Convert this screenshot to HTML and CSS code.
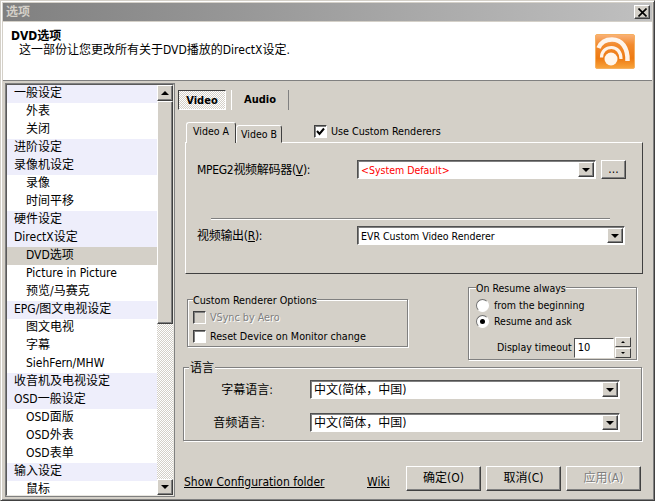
FILE: index.html
```html
<!DOCTYPE html>
<html lang="zh">
<head>
<meta charset="utf-8">
<title>选项</title>
<link rel="stylesheet" href="styles.css">
</head>
<body>
<div class="window">
  <div class="titlebar">
    <span class="title-text">选项</span>
    <button class="close-btn" aria-label="关闭">
      <svg width="9" height="9" viewBox="0 0 9 9"><path d="M0.5 0.5L8.5 8.5M8.5 0.5L0.5 8.5" stroke="#000" stroke-width="1.6" fill="none"/></svg>
    </button>
  </div>
  <header class="header">
    <div class="header-text">
      <div class="header-title">DVD选项</div>
      <div class="header-sub">这一部份让您更改所有关于DVD播放的DirectX设定.</div>
    </div>
    <svg class="logo" width="40" height="35" viewBox="0 0 40 35">
      <defs>
        <linearGradient id="logoFill" x1="0" y1="0" x2="0" y2="1">
          <stop offset="0" stop-color="#f9b27a"/>
          <stop offset="0.3" stop-color="#f28a2e"/>
          <stop offset="0.7" stop-color="#ee7a12"/>
          <stop offset="1" stop-color="#f8a43c"/>
        </linearGradient>
      </defs>
      <rect x="0.5" y="0.5" width="39" height="34" rx="1.5" fill="url(#logoFill)" stroke="#f6b060"/>
      <circle cx="16" cy="25" r="6.5" fill="#fff6ec"/>
      <path d="M6.5 23.5C6.5 17 11 13.500 16.500 13.500C22 13.500 26 18 26 25" stroke="#fff" stroke-width="3.2" fill="none" opacity="0.9"/>
      <path d="M3.500 14C6 8 11 5.500 17 5.500C27 5.500 33 14 32.500 27" stroke="#fff" stroke-width="4.500" fill="none" opacity="0.9"/>
    </svg>
  </header>
  <div class="main">
    <nav class="tree">
      <ul class="tree-list">
        <li class="group">一般设定</li>
        <li class="leaf">外表</li>
        <li class="leaf">关闭</li>
        <li class="group">进阶设定</li>
        <li class="group">录像机设定</li>
        <li class="leaf">录像</li>
        <li class="leaf">时间平移</li>
        <li class="group">硬件设定</li>
        <li class="group">DirectX设定</li>
        <li class="leaf selected">DVD选项</li>
        <li class="leaf">Picture in Picture</li>
        <li class="leaf">预览/马赛克</li>
        <li class="group">EPG/图文电视设定</li>
        <li class="leaf">图文电视</li>
        <li class="leaf">字幕</li>
        <li class="leaf">SiehFern/MHW</li>
        <li class="group">收音机及电视设定</li>
        <li class="group">OSD一般设定</li>
        <li class="leaf">OSD面版</li>
        <li class="leaf">OSD外表</li>
        <li class="leaf">OSD表单</li>
        <li class="group">输入设定</li>
        <li class="leaf">鼠标</li>
      </ul>
      <div class="scrollbar">
        <div class="sb-btn"><span class="arrow-up"></span></div>
        <div class="sb-thumb"></div>
        <div class="sb-track"></div>
        <div class="sb-btn"><span class="arrow-down"></span></div>
      </div>
    </nav>
    <section class="content">
      <div class="outer-tabs">
        <div class="outer-tab active"><span class="focus">Video</span></div>
        <div class="outer-tab">Audio</div>
      </div>
      <div class="inner-tabs">
        <div class="inner-tab active">Video A</div>
        <div class="inner-tab">Video B</div>
        <label class="check custom-renderers"><span class="box checked"><svg width="9" height="9" viewBox="0 0 9 9"><path d="M1 4L3.500 7L8 1.500" stroke="#000" stroke-width="2" fill="none"/></svg></span>Use Custom Renderers</label>
      </div>
      <div class="inner-panel">
        <div class="form-row decoder">
          <span class="field-label">MPEG2视频解码器(<u>V</u>):</span>
          <div class="combo combo-short"><span class="combo-value latin red">&lt;System Default&gt;</span><span class="combo-btn"><span class="arrow-down"></span></span></div>
          <button class="btn more-btn">...</button>
        </div>
        <div class="separator"></div>
        <div class="form-row output">
          <span class="field-label">视频输出(<u>R</u>):</span>
          <div class="combo combo-long"><span class="combo-value latin">EVR Custom Video Renderer</span><span class="combo-btn"><span class="arrow-down"></span></span></div>
        </div>
      </div>
      <div class="options-row">
        <fieldset class="group-box renderer-options">
          <legend>Custom Renderer Options</legend>
          <label class="check disabled"><span class="box"></span>VSync by Aero</label>
          <label class="check"><span class="box"></span>Reset Device on Monitor change</label>
        </fieldset>
        <fieldset class="group-box resume-options">
          <legend>On Resume always</legend>
          <label class="radio"><span class="dot"></span>from the beginning</label>
          <label class="radio"><span class="dot on"></span>Resume and ask</label>
          <div class="timeout">
            <span>Display timeout</span>
            <span class="spin-input">10</span>
            <span class="spin">
              <span class="spin-btn"><span class="arrow-up small"></span></span>
              <span class="spin-btn"><span class="arrow-down small"></span></span>
            </span>
          </div>
        </fieldset>
      </div>
      <fieldset class="group-box language">
        <legend>语言</legend>
        <div class="lang-row subtitle-row">
          <span class="lang-label">字幕语言:</span>
          <div class="combo combo-lang"><span class="combo-value">中文(简体，中国)</span><span class="combo-btn"><span class="arrow-down"></span></span></div>
        </div>
        <div class="lang-row audio-row">
          <span class="lang-label">音频语言:</span>
          <div class="combo combo-lang"><span class="combo-value">中文(简体，中国)</span><span class="combo-btn"><span class="arrow-down"></span></span></div>
        </div>
      </fieldset>
      <footer class="footer">
        <a class="link config-link">Show Configuration folder</a>
        <a class="link wiki-link">Wiki</a>
        <button class="btn action">确定(O)</button>
        <button class="btn action">取消(C)</button>
        <button class="btn action disabled">应用(A)</button>
      </footer>
    </section>
  </div>
</div>
</body>
</html>
```
FILE: styles.css
```css
* { box-sizing: border-box; }

html, body {
  margin: 0;
  padding: 0;
  width: 655px;
  height: 501px;
  overflow: hidden;
}

body {
  font: 12px/15px "DejaVu Sans Condensed", "DejaVu Sans", "Noto Sans CJK SC", sans-serif;
  font-stretch: condensed;
  color: #000;
  background: #d4d0c8;
}

.window {
  width: 655px;
  height: 501px;
  padding: 2px;
  border: 1px solid;
  border-color: #d4d0c8 #404040 #404040 #d4d0c8;
  box-shadow: inset 1px 1px 0 #fff, inset -1px -1px 0 #808080;
  background: #d4d0c8;
  display: flex;
  flex-direction: column;
}

/* Caption */
.titlebar {
  height: 18px;
  flex: none;
  display: flex;
  align-items: center;
  justify-content: space-between;
  padding: 0 2px 0 3px;
  background: linear-gradient(to right, #808080, #c0c0c0);
  color: #d4d0c8;
  font-weight: bold;
}

.close-btn {
  width: 16px;
  height: 14px;
  padding: 0;
  display: flex;
  align-items: center;
  justify-content: center;
  background: #d4d0c8;
  border: 1px solid;
  border-color: #fff #404040 #404040 #fff;
  box-shadow: inset -1px -1px 0 #808080;
}

/* White banner */
.header {
  height: 59px;
  margin-top: 1px;
  flex: none;
  display: flex;
  justify-content: space-between;
  background: #fff;
  border-bottom: 1px solid #808080;
  padding: 7px 17px 0 8px;
}

.header-title {
  font-weight: bold;
  line-height: 14px;
}

.header-sub {
  margin-left: 8px;
  line-height: 14px;
}

.logo {
  margin-top: 5px;
}

.main {
  flex: 1;
  display: flex;
  min-height: 0;
}

/* Settings tree */
.tree {
  width: 170px;
  height: 414px;
  margin: 2px 0 0 2px;
  flex: none;
  display: flex;
  background: #fff;
  border: 2px solid;
  border-color: #5a5a5a #e8e6e0 #e8e6e0 #5a5a5a;
  outline: 1px solid #808080;
  outline-offset: -1px;
  overflow: hidden;
}

.tree-list {
  flex: 1;
  margin: 0;
  padding: 0;
  list-style: none;
  overflow: hidden;
}

.tree-list li {
  height: 18px;
  line-height: 16px;
  white-space: nowrap;
}

.group {
  padding-left: 7px;
  background: #eeeefb;
}

.leaf {
  padding-left: 19px;
}

.selected {
  background: #d4d0c8;
}

.scrollbar {
  width: 16px;
  flex: none;
  display: flex;
  flex-direction: column;
  background: repeating-conic-gradient(#d4d0c8 0 25%, #fff 0 50%) 0 0 / 2px 2px;
}

.sb-btn {
  height: 16px;
  flex: none;
  display: flex;
  align-items: center;
  justify-content: center;
  background: #d4d0c8;
  border: 1px solid;
  border-color: #fff #404040 #404040 #fff;
  box-shadow: inset -1px -1px 0 #808080;
}

.sb-thumb {
  height: 223px;
  flex: none;
  background: #d4d0c8;
  border: 1px solid;
  border-color: #fff #404040 #404040 #fff;
  box-shadow: inset -1px -1px 0 #808080;
}

.sb-track {
  flex: 1;
}

.arrow-up,
.arrow-down {
  display: block;
  width: 0;
  height: 0;
  border-left: 4px solid transparent;
  border-right: 4px solid transparent;
}

.arrow-up { border-bottom: 4px solid #000; }
.arrow-down { border-top: 4px solid #000; }

.arrow-up.small,
.arrow-down.small {
  border-left-width: 2px;
  border-right-width: 2px;
}
.arrow-up.small { border-bottom-width: 2px; }
.arrow-down.small { border-top-width: 2px; }

/* Right-hand page */
.content {
  flex: 1;
  min-width: 0;
  padding: 9px 0 0 3px;
}

.outer-tabs {
  display: flex;
  height: 21px;
  font-weight: bold;
  font-size: 11px;
}

.outer-tab {
  width: 58px;
  height: 20px;
  margin-left: 5px;
  text-align: center;
  line-height: 20px;
  border-right: 1px solid #808080;
  border-left: 1px solid #fff;
}

.outer-tab.active {
  width: 48px;
  margin-left: 0;
  padding: 0;
  border: 1px solid;
  border-color: #404040 #fff #fff #404040;
  background: repeating-conic-gradient(#d4d0c8 0 25%, #fff 0 50%) 0 0 / 2px 2px;
}

.inner-tabs {
  display: flex;
  align-items: flex-end;
  height: 21px;
  margin: 11px 0 0 8px;
}

.inner-tab {
  width: 46px;
  height: 18px;
  font-size: 10.5px;
  line-height: 17px;
  text-align: center;
  background: #d4d0c8;
  border: 1px solid;
  border-color: #fff #404040 transparent #fff;
  border-radius: 3px 3px 0 0;
  white-space: nowrap;
}

.inner-tab.active {
  width: 50px;
  height: 21px;
  line-height: 17px;
  border-right-color: #404040;
  border-bottom: 0;
  position: relative;
  z-index: 1;
}

.check,
.radio {
  display: flex;
  align-items: center;
  white-space: nowrap;
  font-size: 10.7px;
}

.box {
  width: 13px;
  height: 13px;
  flex: none;
  display: flex;
  align-items: center;
  justify-content: center;
  margin-right: 4px;
  background: #fff;
  border: 1px solid;
  border-color: #404040 #fff #fff #404040;
  box-shadow: inset 1px 1px 0 #808080;
}

.custom-renderers {
  margin: 0 0 4px 32px;
}

.inner-panel {
  width: 458px;
  height: 132px;
  margin: -1px 0 0 7px;
  border: 1px solid;
  border-color: #fff #404040 #404040 #fff;
  padding: 17px 15px 0 11px;
}

.form-row {
  display: flex;
  align-items: center;
  height: 19px;
}

.field-label {
  width: 160px;
  flex: none;
  white-space: nowrap;
  padding-top: 1px;
  letter-spacing: -0.3px;
}

.combo {
  display: flex;
  align-items: center;
  justify-content: space-between;
  height: 19px;
  background: #fff;
  border: 1px solid;
  border-color: #505050 #fff #fff #505050;
  box-shadow: inset 1px 1px 0 #808080;
  padding: 0 1px 0 3px;
}

.combo-short { width: 239px; }
.combo-long { width: 268px; }
.combo-lang { width: 310px; }

.combo-value {
  white-space: nowrap;
  padding-top: 1px;
}

.combo-value.latin {
  font-size: 10.5px;
}

.red {
  color: #f00;
}

.combo-btn {
  width: 16px;
  height: 15px;
  flex: none;
  display: flex;
  align-items: center;
  justify-content: center;
  background: #d4d0c8;
  border: 1px solid;
  border-color: #fff #404040 #404040 #fff;
  box-shadow: inset -1px -1px 0 #808080;
}

.btn {
  font: inherit;
  color: #000;
  padding: 0;
  background: #d4d0c8;
  border: 1px solid;
  border-color: #fff #404040 #404040 #fff;
  box-shadow: inset -1px -1px 0 #808080;
}

.more-btn {
  width: 25px;
  height: 19px;
  margin-left: 5px;
  line-height: 11px;
}

.separator {
  width: 399px;
  height: 2px;
  margin: 39px 0 6px 14px;
  background: #808080;
  border-bottom: 1px solid #fff;
}

/* Group boxes */
.group-box {
  margin: 0;
  padding: 0;
  min-width: 0;
  border: 1px solid #808080;
  box-shadow: 1px 1px 0 #fff, inset 1px 1px 0 #fff;
}

.group-box legend {
  padding: 2px 0 0;
  margin-left: 0;
  line-height: 13px;
  white-space: nowrap;
  background: #d4d0c8;
}

.options-row {
  display: flex;
  align-items: flex-start;
  margin-top: 6px;
}

.renderer-options {
  width: 221px;
  height: 55px;
  margin: 12px 0 0 9px;
  padding: 1px 0 0 5px;
}

.renderer-options legend {
  font-size: 10.7px;
}

.renderer-options .check {
  height: 19px;
}

.renderer-options .check.disabled {
  color: #808080;
  text-shadow: 1px 1px 0 #fff;
}

.renderer-options .check.disabled .box {
  background: #d4d0c8;
}

.resume-options {
  width: 169px;
  height: 80px;
  margin-left: 60px;
  padding: 2px 0 0 7px;
  font-size: 10.5px;
}

.radio {
  height: 16px;
  font-size: 10.5px;
}

.dot {
  width: 13px;
  height: 13px;
  flex: none;
  margin-right: 5px;
  display: flex;
  align-items: center;
  justify-content: center;
  background: #fff;
  border: 1px solid;
  border-color: #707070 #fff #fff #707070;
  border-radius: 50%;
}

.dot.on::after {
  content: "";
  width: 5px;
  height: 5px;
  border-radius: 50%;
  background: #000;
}

.timeout {
  display: flex;
  align-items: center;
  margin: 8px 0 0 21px;
  white-space: nowrap;
}

.spin-input {
  width: 40px;
  height: 20px;
  margin-left: 2px;
  padding-left: 3px;
  line-height: 17px;
  font-size: 11px;
  background: #fff;
  border: 1px solid;
  border-color: #505050 #fff #fff #505050;
}

.spin {
  display: flex;
  flex-direction: column;
  gap: 1px;
  margin-left: 1px;
}

.spin-btn {
  width: 16px;
  height: 10px;
  display: flex;
  align-items: center;
  justify-content: center;
  background: #d4d0c8;
  border: 1px solid;
  border-color: #fff #404040 #404040 #fff;
}

.language {
  width: 459px;
  height: 81px;
  margin: 0 0 0 5px;
  padding: 5px 0 0 0;
}

.group-box.language legend {
  padding: 2px 1px 0;
  margin-left: 5px;
}

.lang-row {
  display: flex;
  align-items: center;
  justify-content: flex-end;
  height: 19px;
  padding-right: 21px;
}

.audio-row {
  margin-top: 14px;
}

.lang-label {
  white-space: nowrap;
  padding-top: 1px;
}

.subtitle-row .lang-label {
  margin-right: 37px;
}

.audio-row .lang-label {
  margin-right: 45px;
}

/* Bottom row: links and dialog buttons */
.footer {
  display: flex;
  align-items: center;
  height: 25px;
  margin: 25px 0 0 6px;
}

.link {
  color: #000;
  text-decoration: underline;
  white-space: nowrap;
  padding-top: 8px;
}

.config-link {
  width: 183px;
  flex: none;
}

.wiki-link {
  width: 39px;
  flex: none;
}

.action {
  width: 75px;
  height: 25px;
  margin-right: 5px;
}

.action.disabled {
  color: #808080;
  text-shadow: 1px 1px 0 #fff;
}
```
